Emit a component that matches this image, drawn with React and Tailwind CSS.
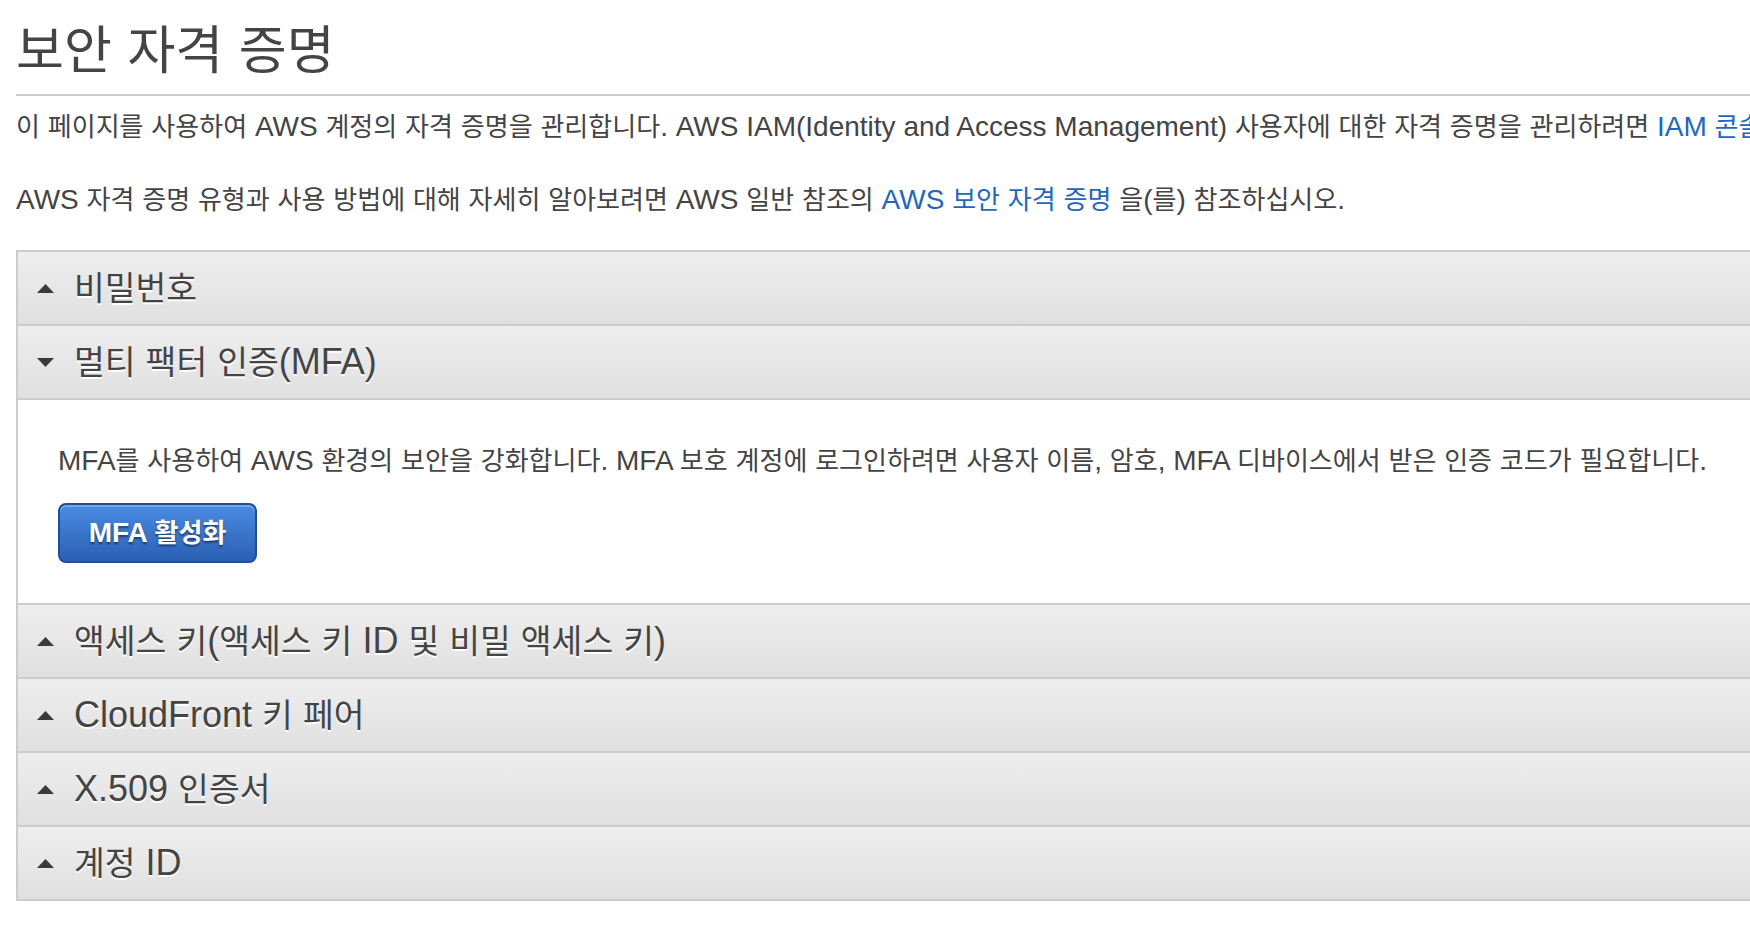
import React from 'react';

// hangul runs are drawn a bit smaller so they keep the width of the original font
const HANGUL = /([\uAC00-\uD7A3\u3131-\u318E]+)/;

function Ko({ children }) {
  return String(children)
    .split(HANGUL)
    .map((part, i) =>
      i % 2 === 1 ? (
        <span key={i} className="text-[0.93em]">{part}</span>
      ) : (
        part
      )
    );
}

function Arrow({ open }) {
  return (
    <svg width="17" height="9" viewBox="0 0 17 9" className="shrink-0">
      {open ? (
        <polygon points="0,0 17,0 8.5,9" fill="#3a3a3a" />
      ) : (
        <polygon points="0,9 17,9 8.5,0" fill="#3a3a3a" />
      )}
    </svg>
  );
}

function SectionHeader({ title, open }) {
  return (
    <div className="h-[74px] border-b-2 border-[#cccccc] bg-linear-to-b from-[#eeeeee] to-[#e0e0e0] flex items-center pl-[19px] gap-[20px]">
      <Arrow open={open} />
      <span className="text-[36px] text-[#444444] [text-shadow:0_2px_0_#ffffff]">
        <Ko>{title}</Ko>
      </span>
    </div>
  );
}

const sections = [
  { title: '비밀번호' },
  { title: '멀티 팩터 인증(MFA)', open: true },
  { title: '액세스 키(액세스 키 ID 및 비밀 액세스 키)' },
  { title: 'CloudFront 키 페어' },
  { title: 'X.509 인증서' },
  { title: '계정 ID' },
];

export default function App() {
  return (
    <div className="w-screen h-screen overflow-hidden bg-white">
      <div className="w-[1900px] pl-4 pt-[12px] text-[#444444] font-['Liberation_Sans','Noto_Sans_CJK_KR',sans-serif] whitespace-nowrap">
        {/* Title */}
        <h1 className="text-[56px] leading-[76px] font-normal">
          <Ko>보안 자격 증명</Ko>
        </h1>
        <div className="mt-[5px] border-t-2 border-[#cccccc]" />

        {/* Intro */}
        <p className="mt-[11px] text-[28px] leading-[40px]">
          <Ko>
            이 페이지를 사용하여 AWS 계정의 자격 증명을 관리합니다. AWS IAM(Identity and Access Management) 사용자에 대한 자격 증명을 관리하려면
          </Ko>{' '}
          <a className="text-[#2367bd]">
            <Ko>IAM 콘솔</Ko>
          </a>
          <Ko>을(를) 사용하십시오.</Ko>
        </p>
        <p className="mt-[33px] text-[28px] leading-[40px]">
          <Ko>AWS 자격 증명 유형과 사용 방법에 대해 자세히 알아보려면 AWS 일반 참조의</Ko>{' '}
          <a className="text-[#2367bd]">
            <Ko>AWS 보안 자격 증명</Ko>
          </a>{' '}
          <Ko>을(를) 참조하십시오.</Ko>
        </p>

        {/* Accordion */}
        <div className="mt-[30px] border-t-2 border-l-2 border-[#cccccc]">
          {sections.map((s) => (
            <div key={s.title}>
              <SectionHeader title={s.title} open={s.open} />
              {s.open && (
                <div className="bg-white border-b-2 border-[#cccccc] pl-[40px] pt-[41px] pb-[40px]">
                  <p className="text-[28px] leading-[40px]">
                    <Ko>
                      MFA를 사용하여 AWS 환경의 보안을 강화합니다. MFA 보호 계정에 로그인하려면 사용자 이름, 암호, MFA 디바이스에서 받은 인증 코드가 필요합니다.
                    </Ko>
                  </p>
                  <button className="mt-[22px] h-[60px] w-[199px] rounded-[8px] border-2 border-[#1d4f9a] bg-linear-to-b from-[#4b8be3] to-[#2b60b3] shadow-[inset_0_2px_0_rgba(255,255,255,0.25)] text-white text-[28px] font-bold [text-shadow:0_2px_2px_rgba(0,0,0,0.45)]">
                    <Ko>MFA 활성화</Ko>
                  </button>
                </div>
              )}
            </div>
          ))}
        </div>
      </div>
    </div>
  );
}
